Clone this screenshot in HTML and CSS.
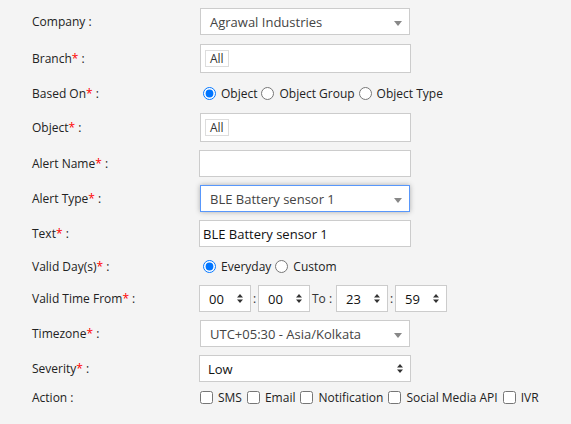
FILE: index.html
```html
<!DOCTYPE html>
<html lang="en">
<head>
    <meta charset="UTF-8">
    <meta name="viewport" content="width=device-width, initial-scale=1.0">
    <title>Alert Settings</title>
    <link rel="stylesheet" href="styles.css">
</head>
<body>
    <form class="alert-form">
        <div class="form-row first">
            <label class="form-label">Company :</label>
            <div class="s2-choice">
                <span class="s2-chosen">Agrawal Industries</span>
                <svg class="s2-arrow" width="8" height="5" viewBox="0 0 8 5"><path d="M0 0H8L4 5Z" fill="#888"/></svg>
            </div>
        </div>

        <div class="form-row">
            <label class="form-label">Branch<span class="req">*</span> :</label>
            <div class="multi-box"><span class="tag">All</span></div>
        </div>

        <div class="form-row radio-row">
            <label class="form-label">Based On<span class="req">*</span> :</label>
            <div class="options">
                <label class="opt"><input type="radio" name="basedOn" checked>Object</label>
                <label class="opt"><input type="radio" name="basedOn">Object Group</label>
                <label class="opt"><input type="radio" name="basedOn">Object Type</label>
            </div>
        </div>

        <div class="form-row">
            <label class="form-label">Object<span class="req">*</span> :</label>
            <div class="multi-box"><span class="tag">All</span></div>
        </div>

        <div class="form-row">
            <label class="form-label">Alert Name<span class="req">*</span> :</label>
            <input type="text" class="text-input" value="">
        </div>

        <div class="form-row">
            <label class="form-label">Alert Type<span class="req">*</span> :</label>
            <div class="s2-choice s2-focus">
                <span class="s2-chosen">BLE Battery sensor 1</span>
                <svg class="s2-arrow" width="8" height="5" viewBox="0 0 8 5"><path d="M0 0H8L4 5Z" fill="#888"/></svg>
            </div>
        </div>

        <div class="form-row">
            <label class="form-label">Text<span class="req">*</span> :</label>
            <input type="text" class="text-input" value="BLE Battery sensor 1">
        </div>

        <div class="form-row radio-row small">
            <label class="form-label">Valid Day(s)<span class="req">*</span> :</label>
            <div class="options">
                <label class="opt"><input type="radio" name="validDays" checked>Everyday</label>
                <label class="opt"><input type="radio" name="validDays">Custom</label>
            </div>
        </div>

        <div class="form-row">
            <label class="form-label">Valid Time From<span class="req">*</span> :</label>
            <div class="time-range">
                <div class="spin-box">
                    <input type="text" class="spin-input" value="00">
                    <svg class="spin-arrows" width="6" height="9" viewBox="0 0 6 9"><path d="M0 3.5L3 0L6 3.5Z M0 5.5H6L3 9Z" fill="#333"/></svg>
                </div>
                <span class="sep">:</span>
                <div class="spin-box">
                    <input type="text" class="spin-input" value="00">
                    <svg class="spin-arrows" width="6" height="9" viewBox="0 0 6 9"><path d="M0 3.5L3 0L6 3.5Z M0 5.5H6L3 9Z" fill="#333"/></svg>
                </div>
                <span class="to">To :</span>
                <div class="spin-box">
                    <input type="text" class="spin-input" value="23">
                    <svg class="spin-arrows" width="6" height="9" viewBox="0 0 6 9"><path d="M0 3.5L3 0L6 3.5Z M0 5.5H6L3 9Z" fill="#333"/></svg>
                </div>
                <span class="sep">:</span>
                <div class="spin-box">
                    <input type="text" class="spin-input" value="59">
                    <svg class="spin-arrows" width="6" height="9" viewBox="0 0 6 9"><path d="M0 3.5L3 0L6 3.5Z M0 5.5H6L3 9Z" fill="#333"/></svg>
                </div>
            </div>
        </div>

        <div class="form-row">
            <label class="form-label">Timezone<span class="req">*</span> :</label>
            <div class="s2-choice">
                <span class="s2-chosen">UTC+05:30 - Asia/Kolkata</span>
                <svg class="s2-arrow" width="8" height="5" viewBox="0 0 8 5"><path d="M0 0H8L4 5Z" fill="#888"/></svg>
            </div>
        </div>

        <div class="form-row">
            <label class="form-label">Severity<span class="req">*</span> :</label>
            <div class="select-wrap">
                <select class="plain-select">
                    <option>Low</option>
                    <option>Medium</option>
                    <option>High</option>
                </select>
                <svg class="select-arrows" width="6" height="9" viewBox="0 0 6 9"><path d="M0 3.5L3 0L6 3.5Z M0 5.5H6L3 9Z" fill="#333"/></svg>
            </div>
        </div>

        <div class="form-row check-row">
            <label class="form-label">Action :</label>
            <div class="options">
                <label class="opt"><input type="checkbox">SMS</label>
                <label class="opt"><input type="checkbox">Email</label>
                <label class="opt"><input type="checkbox">Notification</label>
                <label class="opt"><input type="checkbox">Social Media API</label>
                <label class="opt"><input type="checkbox">IVR</label>
            </div>
        </div>
    </form>
</body>
</html>
```

FILE: styles.css
```css
* {
    box-sizing: border-box;
}

body {
    margin: 0;
    background: #f4f4f4;
    font-family: "Open Sans", "Liberation Sans", sans-serif;
    font-size: 12px;
    color: #333;
}

.alert-form {
    padding-top: 8px;
}

.form-row {
    display: flex;
    align-items: center;
    margin-bottom: 8px;
}

.form-row.first {
    margin-bottom: 9px;
}

.form-label {
    width: 199px;
    flex-shrink: 0;
    padding-left: 32px;
    color: #222;
}

.req {
    color: #f00;
}

/* select2 style box */
.s2-choice {
    position: relative;
    display: flex;
    align-items: center;
    width: 210px;
    height: 27px;
    margin-left: 1px;
    padding: 0 20px 0 9px;
    background: #fff;
    border: 1px solid #ccc;
    font-size: 13px;
    color: #444;
}

.s2-focus {
    border-color: #5897fb;
    box-shadow: 0 0 5px rgba(0, 0, 0, 0.3);
}

.s2-arrow {
    position: absolute;
    right: 7px;
    top: 12px;
}

.multi-box {
    display: flex;
    align-items: center;
    width: 211px;
    height: 29px;
    margin-left: 1px;
    padding: 0 4px;
    background: #fff;
    border: 1px solid #ccc;
}

.tag {
    display: inline-block;
    height: 17px;
    line-height: 15px;
    padding: 0 4px;
    border: 1px solid #ddd;
    background: #fff;
    color: #333;
    font-size: 12px;
}

.text-input {
    width: 212px;
    height: 27px;
    margin: 0;
    padding: 0 3px;
    background: #fff;
    border: 1px solid #ccc;
    border-radius: 0;
    font-family: "Open Sans", "Liberation Sans", sans-serif;
    font-size: 13px;
    color: #111;
    outline: none;
}

.radio-row {
    height: 24px;
}

.radio-row.small {
    height: 22px;
}

.options {
    display: flex;
    align-items: center;
}

.opt {
    display: flex;
    align-items: center;
    color: #222;
}

.opt input {
    width: 13px;
    height: 13px;
    margin: 0 5px 0 4px;
}

.check-row {
    height: 15px;
}

.check-row .opt input {
    margin: 0 5px 0 5px;
}

.check-row .opt:first-child input {
    margin-left: 1px;
}

/* time pickers */
.time-range {
    display: flex;
    align-items: center;
}

.spin-box {
    position: relative;
    width: 52px;
    height: 27px;
}

.spin-input {
    width: 100%;
    height: 100%;
    margin: 0;
    padding: 0 0 0 9px;
    background: #fff;
    border: 1px solid #ccc;
    border-radius: 0;
    font-family: "Open Sans", "Liberation Sans", sans-serif;
    font-size: 13px;
    color: #111;
    outline: none;
}

.spin-arrows {
    position: absolute;
    right: 8px;
    top: 9px;
}

.sep {
    width: 7px;
    text-align: center;
}

.to {
    margin: 0 1px 0 2px;
    width: 23px;
}

.select-wrap {
    position: relative;
    width: 212px;
    height: 27px;
}

.plain-select {
    width: 100%;
    height: 100%;
    appearance: none;
    -webkit-appearance: none;
    margin: 0;
    padding: 0 20px 0 8px;
    background: #fff;
    border: 1px solid #ccc;
    border-radius: 0;
    font-family: "Open Sans", "Liberation Sans", sans-serif;
    font-size: 13px;
    color: #111;
    outline: none;
}

.select-arrows {
    position: absolute;
    right: 8px;
    top: 9px;
    pointer-events: none;
}
```
